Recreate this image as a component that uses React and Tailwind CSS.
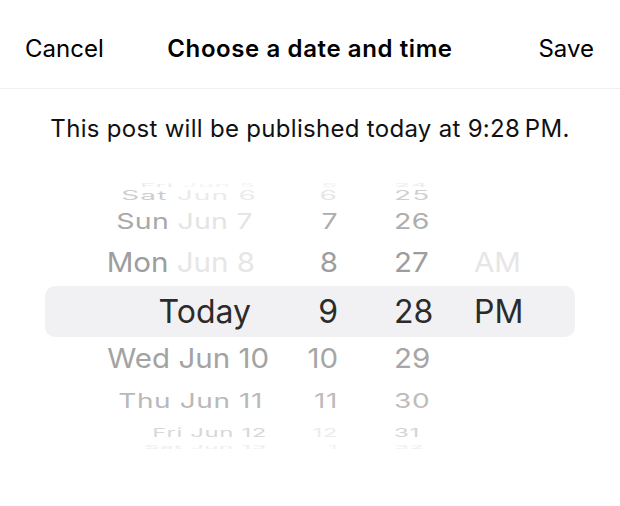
import React from 'react';

// wheel rows, top to bottom; each row has its own height / squash to fake the iOS cylinder
const rows = [
  { h: 'h-[10px]', sy: 'scale-y-[0.2]', size: 'text-[26px] tracking-[1px]', dateMr: 'mr-[6px]', day: 'Fri', mon: 'Jun 5', dayC: 'text-[#ececec]', monC: 'text-[#f4f4f4]', hr: '5', hrC: 'text-[#f0f0f0]', min: '24', minC: 'text-[#ececec]', ap: '', apC: '' },
  { h: 'h-[20px]', sy: 'scale-y-[0.45]', size: 'text-[28px] tracking-[1.2px]', dateMr: 'mr-[5px]', day: 'Sat', mon: 'Jun 6', dayC: 'text-[#cdcdcd]', monC: 'text-[#ebebeb]', hr: '6', hrC: 'text-[#e6e6e6]', min: '25', minC: 'text-[#cfcfcf]', ap: '', apC: '' },
  { h: 'h-[38px]', sy: 'scale-y-[0.75]', size: 'text-[28.5px] tracking-[0.3px]', dateMr: 'mr-[9px]', day: 'Sun', mon: 'Jun 7', dayC: 'text-[#a9a9a9]', monC: 'text-[#e4e4e4]', hr: '7', hrC: 'text-[#adadad]', min: '26', minC: 'text-[#adadad]', ap: '', apC: '' },
  { h: 'h-[46px]', sy: 'scale-y-[0.93]', size: 'text-[29.5px]', dateMr: 'mr-[7px]', day: 'Mon', mon: 'Jun 8', dayC: 'text-[#9d9d9d]', monC: 'text-[#e6e6e6]', hr: '8', hrC: 'text-[#9d9d9d]', min: '27', minC: 'text-[#9d9d9d]', ap: 'AM', apC: 'text-[#e6e6e6]' },
  { sel: true, h: 'h-[51px]', sy: 'scale-y-100', size: 'text-[32px]', dateMr: 'mr-[11px]', day: 'Today', mon: '', dayC: 'text-[#2b2b2b]', monC: '', hr: '9', hrC: 'text-[#2b2b2b]', min: '28', minC: 'text-[#2b2b2b]', ap: 'PM', apC: 'text-[#2b2b2b]' },
  { h: 'h-[44px]', sy: 'scale-y-[0.93]', size: 'text-[29.5px]', dateMr: 'mr-[-7px]', day: 'Wed Jun 10', mon: '', dayC: 'text-[#a3a3a3]', monC: '', hr: '10', hrC: 'text-[#a6a6a6]', min: '29', minC: 'text-[#a6a6a6]', ap: '', apC: '' },
  { h: 'h-[40px]', sy: 'scale-y-[0.72]', size: 'text-[28px] tracking-[0.6px]', dateMr: 'mr-[-1px]', day: 'Thu Jun 11', mon: '', dayC: 'text-[#b9b9b9]', monC: '', hr: '11', hrC: 'text-[#bcbcbc]', min: '30', minC: 'text-[#bcbcbc]', ap: '', apC: '' },
  { h: 'h-[14px]', sy: 'scale-y-[0.5]', size: 'text-[24px] tracking-[0.6px]', dateMr: 'mr-[-5px]', day: 'Fri Jun 12', mon: '', dayC: 'text-[#d8d8d8]', monC: '', hr: '12', hrC: 'text-[#ececec]', min: '31', minC: 'text-[#d4d4d4]', ap: '', apC: '' },
  { h: 'h-[10px]', sy: 'scale-y-[0.2]', size: 'text-[24px] tracking-[0.6px]', dateMr: 'mr-[-5px]', day: 'Sat Jun 13', mon: '', dayC: 'text-[#eeeeee]', monC: '', hr: '1', hrC: 'text-[#f2f2f2]', min: '32', minC: 'text-[#eeeeee]', ap: '', apC: '' },
];

function WheelRow({ r }) {
  return (
    <div
      className={`grid grid-cols-[217px_76px_135px_1fr] items-center ${r.h} ${r.size} leading-none ${
        r.sel ? 'bg-[#f1f1f3] rounded-[10px]' : ''
      }`}
    >
      <div className={`text-right whitespace-nowrap origin-center ${r.sy} ${r.dateMr}`}>
        <span className={r.dayC}>{r.day}</span>
        {r.mon && <span className={r.monC}> {r.mon}</span>}
      </div>
      <div className={`text-right origin-center ${r.sy} ${r.hrC}`}>{r.hr}</div>
      <div className={`pl-[56px] origin-center ${r.sy} ${r.minC}`}>{r.min}</div>
      <div className={`pl-[1px] origin-center ${r.sy} ${r.apC}`}>{r.ap}</div>
    </div>
  );
}

export default function App() {
  return (
    <div className="w-[620px] h-[506px] bg-white text-black font-['Inter','Liberation_Sans',sans-serif] overflow-hidden">
      {/* Top bar */}
      <div className="grid grid-cols-[1fr_auto_1fr] items-center h-[89px] pt-[10px] px-[25px] border-b border-[#efefef]">
        <div className="justify-self-start text-[24px]">Cancel</div>
        <div className="text-[24px] font-semibold tracking-[0.6px]">Choose a date and time</div>
        <div className="justify-self-end text-[24px] pr-[1px]">Save</div>
      </div>

      <p className="mt-[25px] text-center text-[24px] tracking-[0.3px] leading-[30px] text-[#111]">
        This post will be published today at 9:28{'\u202F'}PM.
      </p>

      {/* Wheel picker */}
      <div className="mt-[28px] px-[45px]">
        {rows.map((r, i) => (
          <WheelRow key={i} r={r} />
        ))}
      </div>
    </div>
  );
}
